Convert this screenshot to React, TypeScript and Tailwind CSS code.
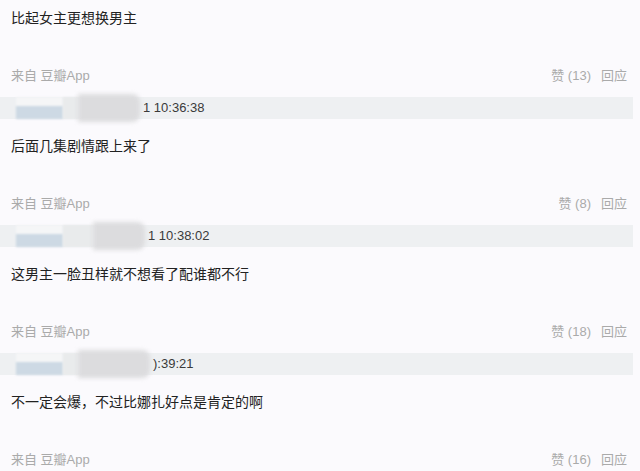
const font = { fontFamily: '"Liberation Sans", "Noto Sans CJK SC", sans-serif' }

type Item = {
  likes: number
  time: string
  grey: number
  light: number
  text?: string
}

const items: Item[] = [
  { likes: 13, time: "1 10:36:38", grey: 62, light: 15, text: "后面几集剧情跟上来了" },
  { likes: 8, time: "1 10:38:02", grey: 52, light: 30, text: "这男主一脸丑样就不想看了配谁都不行" },
  { likes: 18, time: "):39:21", grey: 72, light: 15, text: "不一定会爆，不过比娜扎好点是肯定的啊" },
  { likes: 16, time: "", grey: 0, light: 0 },
]

function Meta({ likes }: { likes: number }) {
  return (
    <div className="flex h-5 items-center justify-between pl-[11px] pr-[13px] text-[13px] text-[#aaaaaa]">
      <span>来自 豆瓣App</span>
      <span className="flex gap-[10px]">
        <span>赞 ({likes})</span>
        <span>回应</span>
      </span>
    </div>
  )
}

function Bar({ item }: { item: Item }) {
  return (
    <div className="mt-[11px] flex h-[22px] w-[633px] items-center bg-[#eef0f2] pl-4">
      <div className="flex h-full w-[47px] flex-col justify-end bg-[#f5f6f7] blur-[1px]">
        <div className="h-[13px] bg-[#cdd9e4]" />
      </div>
      <div className="h-full bg-[#e9ebec] blur-[1px]" style={{ width: item.light }} />
      <div className="h-[28px] rounded-r-lg bg-[#dcdcde] blur-[2px]" style={{ width: item.grey }} />
      <span className="ml-[3px] text-[13px] text-[#3a3a3a]">{item.time}</span>
    </div>
  )
}

export default function App() {
  return (
    <div className="h-[471px] w-[640px] overflow-hidden bg-[#fbfafd]" style={font}>
      <p className="mt-2 h-5 pl-[11px] text-[14px] leading-5 text-[#222222]">比起女主更想换男主</p>
      {items.map((item, i) => (
        <div key={i} className="mt-[38px]">
          <Meta likes={item.likes} />
          {item.text && (
            <>
              <Bar item={item} />
              <p className="mt-[17px] h-5 pl-[11px] text-[14px] leading-5 text-[#222222]">{item.text}</p>
            </>
          )}
        </div>
      ))}
    </div>
  )
}
